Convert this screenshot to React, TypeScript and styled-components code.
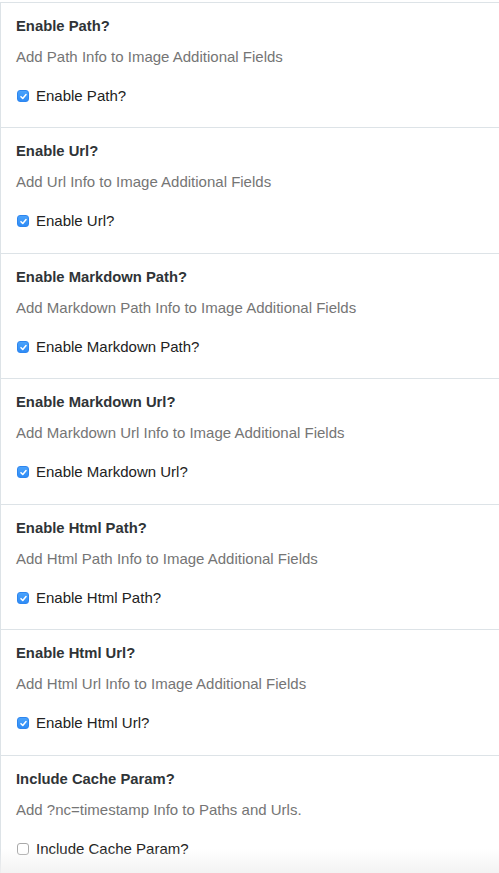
import React from "react";
import styled, { createGlobalStyle } from "styled-components";

const Global = createGlobalStyle`
  html, body { margin: 0; padding: 0; background: #ffffff; }
  body { font-family: "Liberation Sans", Arial, Helvetica, sans-serif; }
  * { box-sizing: border-box; }
`;

const Panel = styled.div`
  margin-top: 2px;
  border-left: 1px solid #dde3e7;
  width: 499px;
  display: flex;
  flex-direction: column;
`;

const Section = styled.section`
  border-top: 1px solid #dde3e7;
  padding: 13px 15px 21px 15px;
  display: flex;
  flex-direction: column;
  &:nth-child(even) {
    padding-bottom: 22px;
  }
`;

const Title = styled.h3`
  margin: 0;
  font-size: 14.8px;
  line-height: 20px;
  font-weight: 700;
  color: #2f3437;
`;

const Description = styled.p`
  margin: 11px 0 0 0;
  font-size: 15px;
  line-height: 20px;
  color: #757575;
`;

const CheckRow = styled.label`
  margin-top: 19px;
  display: flex;
  align-items: center;
  gap: 7px;
  font-size: 15px;
  line-height: 20px;
  color: #222;
  padding-left: 1px;
`;

const Box = styled.span<{ $checked: boolean }>`
  width: 12px;
  height: 12px;
  border-radius: 3px;
  display: inline-flex;
  align-items: center;
  justify-content: center;
  flex-shrink: 0;
  background: ${(p) => (p.$checked ? "linear-gradient(#4aa2fb, #2f8cf6)" : "#fff")};
  border: 1px solid ${(p) => (p.$checked ? "#2e86ef" : "#a9a9a9")};
`;

const Fade = styled.div`
  position: fixed;
  left: 0;
  right: 0;
  bottom: 0;
  height: 24px;
  background: linear-gradient(rgba(240,240,240,0), rgba(240,240,240,0.85));
  pointer-events: none;
`;

const items = [
  { title: "Enable Path?", desc: "Add Path Info to Image Additional Fields", label: "Enable Path?", checked: true },
  { title: "Enable Url?", desc: "Add Url Info to Image Additional Fields", label: "Enable Url?", checked: true },
  { title: "Enable Markdown Path?", desc: "Add Markdown Path Info to Image Additional Fields", label: "Enable Markdown Path?", checked: true },
  { title: "Enable Markdown Url?", desc: "Add Markdown Url Info to Image Additional Fields", label: "Enable Markdown Url?", checked: true },
  { title: "Enable Html Path?", desc: "Add Html Path Info to Image Additional Fields", label: "Enable Html Path?", checked: true },
  { title: "Enable Html Url?", desc: "Add Html Url Info to Image Additional Fields", label: "Enable Html Url?", checked: true },
  { title: "Include Cache Param?", desc: "Add ?nc=timestamp Info to Paths and Urls.", label: "Include Cache Param?", checked: false },
];

const Check = ({ checked }: { checked: boolean }) => (
  <Box $checked={checked}>
    {checked && (
      <svg width="9" height="9" viewBox="0 0 10 10">
        <path d="M2.2 5.2 L4.2 7.2 L7.8 2.8" fill="none" stroke="#fff" strokeWidth="1.7" strokeLinecap="round" strokeLinejoin="round" />
      </svg>
    )}
  </Box>
);

export default function App() {
  return (
    <>
      <Global />
      <Panel>
        {items.map((it) => (
          <Section key={it.title}>
            <Title>{it.title}</Title>
            <Description>{it.desc}</Description>
            <CheckRow>
              <Check checked={it.checked} />
              {it.label}
            </CheckRow>
          </Section>
        ))}
      </Panel>
      <Fade />
    </>
  );
}
